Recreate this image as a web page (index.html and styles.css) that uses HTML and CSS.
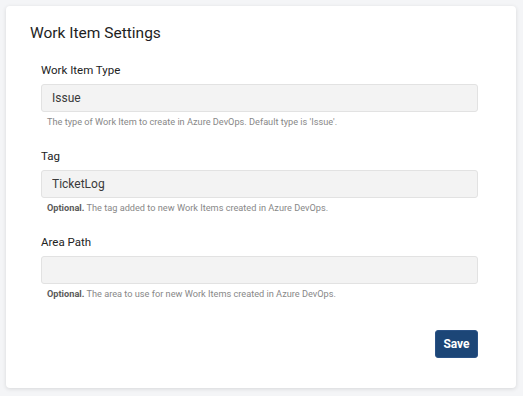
FILE: index.html
```html
<!DOCTYPE html>
<html lang="en">
  <head>
    <meta charset="UTF-8" />
    <meta name="viewport" content="width=device-width, initial-scale=1.0" />
    <title>Work Item Settings</title>
    <link rel="stylesheet" href="styles.css">
  </head>
  <body>
    <div class="card">
      <h1>Work Item Settings</h1>

      <form class="settings">
        <div class="field">
          <label for="wi_type">Work Item Type</label>
          <input id="wi_type" type="text" value="Issue" />
          <p class="help">The type of Work Item to create in Azure DevOps. Default type is 'Issue'.</p>
        </div>

        <div class="field">
          <label for="wi_tag">Tag</label>
          <input id="wi_tag" type="text" value="TicketLog" />
          <p class="help"><strong>Optional.</strong> The tag added to new Work Items created in Azure DevOps.</p>
        </div>

        <div class="field">
          <label for="wi_area">Area Path</label>
          <input id="wi_area" type="text" value="" />
          <p class="help"><strong>Optional.</strong> The area to use for new Work Items created in Azure DevOps.</p>
        </div>

        <div class="actions">
          <button type="button" id="save">Save</button>
        </div>
      </form>
    </div>
  </body>
</html>
```

FILE: styles.css
```css
body {
  font-family: Roboto, "Open Sans", sans-serif;
  background: #f4f5f7;
  margin: 0;
  padding: 6px 7px 8px 6px;
}
.card {
  background: white;
  border-radius: 4px;
  box-shadow: 0 1px 4px rgba(0, 0, 0, 0.12);
  height: 382px;
  box-sizing: border-box;
  padding: 17px 38px 0 24px;
}
h1 {
  font-size: 15.5px;
  line-height: 20px;
  font-weight: 400;
  color: #1e1e1e;
  margin: 0 0 20px 0;
}
.settings {
  padding-left: 11px;
}
.field {
  margin-bottom: 21px;
}
.field label {
  display: block;
  font-size: 11.5px;
  line-height: 14px;
  color: #222;
  margin-bottom: 7px;
}
.field input {
  display: block;
  width: 100%;
  box-sizing: border-box;
  height: 28px;
  padding: 0 10px;
  font-family: inherit;
  font-size: 12px;
  color: #3a3a3a;
  background: #f3f3f3;
  border: 1px solid #e2e2e2;
  border-radius: 3px;
}
.help {
  font-size: 9.2px;
  line-height: 12px;
  color: #888;
  margin: 4px 0 0 6px;
}
.help strong {
  color: #5a5a5a;
}
.actions {
  display: flex;
  justify-content: flex-end;
  margin-top: 30px;
}
.actions button {
  background: #1c4677;
  color: white;
  font-family: inherit;
  font-size: 12px;
  font-weight: 700;
  border: 1px solid #2a5286;
  border-radius: 3px;
  padding: 0;
  width: 43px;
  height: 28px;
}
```
